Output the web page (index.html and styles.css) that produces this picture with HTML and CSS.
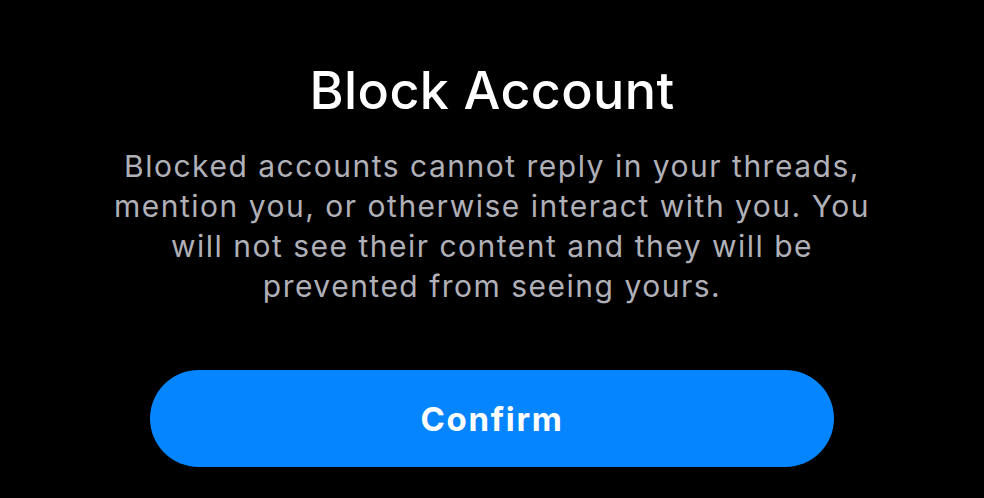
FILE: index.html
```html
<!DOCTYPE html>
<html lang="en">
<head>
<meta charset="utf-8">
<title>Block Account</title>
<link rel="stylesheet" href="styles.css">
</head>
<body>
<main class="sheet">
  <h1 class="title">Block Account</h1>
  <p class="desc">Blocked accounts cannot reply in your threads,<br>mention you, or otherwise interact with you. You<br>will not see their content and they will be<br>prevented from seeing yours.</p>
  <button class="confirm" type="button">Confirm</button>
</main>
</body>
</html>
```
FILE: styles.css
```css
html, body {
  margin: 0;
  padding: 0;
  background: #000;
}
body {
  width: 984px;
  height: 498px;
  overflow: hidden;
  font-family: Inter, "Noto Sans", sans-serif;
}
.sheet {
  display: flex;
  flex-direction: column;
  align-items: center;
  padding-top: 60px;
}
.title {
  margin: 0;
  font-size: 52px;
  line-height: 62px;
  font-weight: 500;
  color: #fff;
  letter-spacing: 0.4px;
}
.desc {
  margin: 24px 0 0;
  font-size: 30px;
  line-height: 40px;
  color: #b0b0b8;
  text-align: center;
  font-weight: 400;
  letter-spacing: 1.5px;
  white-space: nowrap;
}
.confirm {
  margin-top: 64px;
  width: 684px;
  height: 97px;
  border: none;
  border-radius: 49px;
  background: #0585ff;
  color: #fff;
  font-family: inherit;
  font-size: 33px;
  font-weight: 700;
  letter-spacing: 1.7px;
  padding: 0;
}
```
